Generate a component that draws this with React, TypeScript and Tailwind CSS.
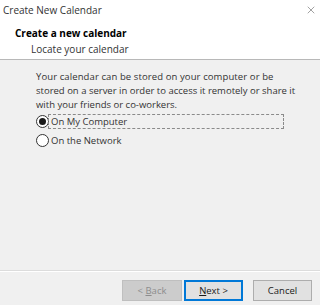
import { X } from "lucide-react";

const font = { fontFamily: '"Open Sans", "Noto Sans", sans-serif' };

function Radio({ checked, label, focused }: { checked?: boolean; label: string; focused?: boolean }) {
  return (
    <div className="flex items-center h-[19px]">
      <span className="w-[13px] h-[13px] rounded-full border border-[#333] bg-white flex items-center justify-center shrink-0">
        {checked && <span className="w-[7px] h-[7px] rounded-full bg-[#1a1a1a]" />}
      </span>
      <span
        className={
          "ml-[-1px] pl-[2px] h-[15px] flex items-center leading-none " +
          (focused ? "w-[236px] border border-dashed border-[#8a8a8a]" : "border border-transparent")
        }
      >
        {label}
      </span>
    </div>
  );
}

export default function App() {
  return (
    <div className="w-[320px] h-[305px] bg-[#f0f0f0] flex flex-col text-[9.5px] text-[#1a1a1a]" style={font}>
      <div className="h-[60px] bg-white border-b border-[#b8b8b8] flex flex-col">
        <div className="flex items-center justify-between h-[20px] pl-[3px] pr-[3px] text-[#333] text-[10px]">
          <span>Create New Calendar</span>
          <X size={12} strokeWidth={1} className="text-[#444]" />
        </div>
        <div className="pl-[15px] mt-[5px] font-bold text-[10px] leading-[16px] text-black">Create a new calendar</div>
        <div className="pl-[31px] leading-[16px] text-[10px] text-[#333]">Locate your calendar</div>
      </div>

      <div className="flex-1 pl-[36px] pt-[10px] text-[#333]">
        <p className="leading-[14px] whitespace-nowrap">
          <span className="tracking-[0.1px]">Your calendar can be stored on your computer or be</span>
          <br />
          stored on a server in order to access it remotely or share it
          <br />
          with your friends or co-workers.
        </p>
        <div className="flex flex-col">
          <Radio checked focused label="On My Computer" />
          <Radio label="On the Network" />
        </div>
      </div>

      <div className="border-t border-[#dcdcdc] bg-[#f0f0f0]">
        <div className="border-t border-white flex justify-end items-center pt-[8px] pb-[4px] pr-[8px]">
          <button className="w-[60px] h-[21px] bg-[#cccccc] border border-[#bfbfbf] text-[#8c8c8c] leading-none">
            &lt; <span className="underline">B</span>ack
          </button>
          <button className="ml-[2px] w-[59px] h-[21px] bg-[#e1e1e1] border-2 border-[#0078d7] text-[#1a1a1a] leading-none">
            <span className="underline">N</span>ext &gt;
          </button>
          <button className="ml-[10px] w-[59px] h-[21px] bg-[#e1e1e1] border border-[#adadad] text-[#1a1a1a] leading-none">
            Cancel
          </button>
        </div>
      </div>
    </div>
  );
}
